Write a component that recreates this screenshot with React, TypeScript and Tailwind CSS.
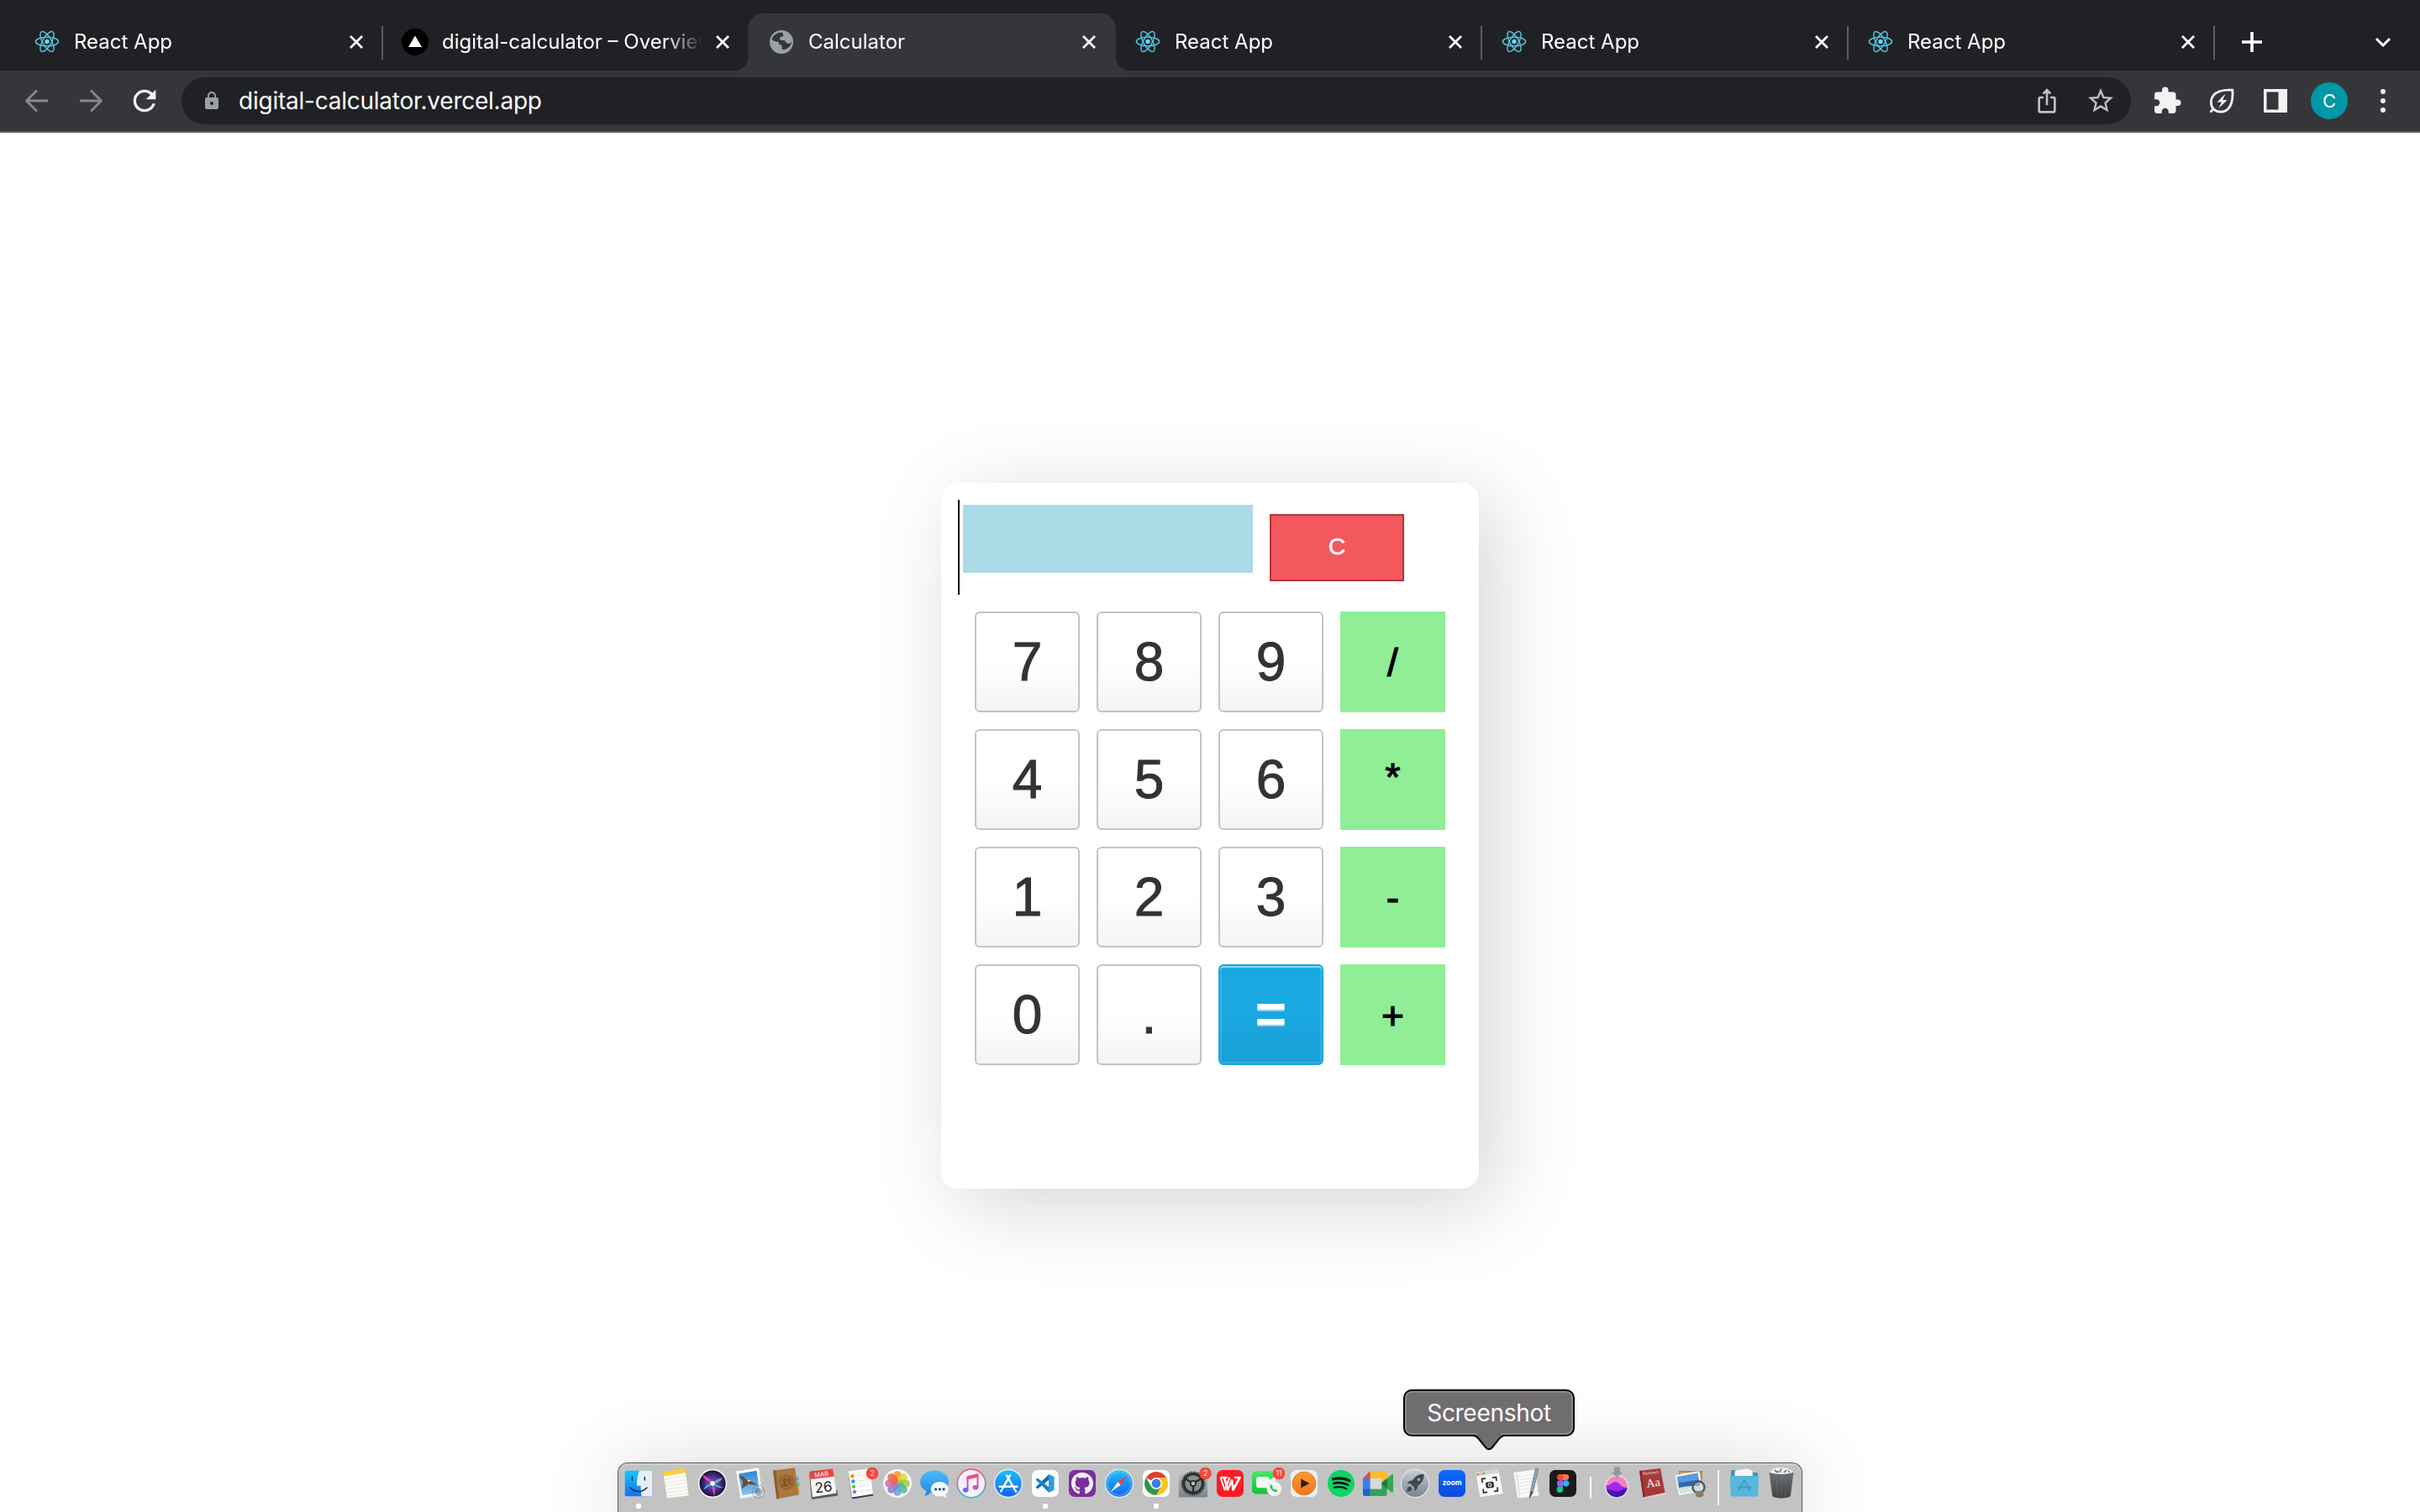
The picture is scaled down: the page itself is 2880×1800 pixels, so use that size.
import React from "react";
import { FaGithub, FaSpotify } from "react-icons/fa";
import { MdExtension, MdIosShare, MdLock, MdRefresh, MdStarBorder } from "react-icons/md";

/* ---------- Tab favicons ---------- */

function ReactFavicon() {
  return (
    <svg viewBox="0 0 32 32" className="size-8">
      <g fill="none" stroke="#53c1de" strokeWidth="1.5">
        <ellipse cx="16" cy="15.500" rx="13.6" ry="5.2" />
        <ellipse cx="16" cy="15.500" rx="13.4" ry="5.2" transform="rotate(60 16 15.5)" />
        <ellipse cx="16" cy="15.500" rx="13.4" ry="5.2" transform="rotate(120 16 15.5)" />
      </g>
      <circle cx="16" cy="15.500" r="2.7" fill="#61dafb" />
    </svg>
  );
}

function VercelFavicon() {
  return (
    <svg viewBox="0 0 32 32" className="size-8">
      <circle cx="16" cy="16" r="16" fill="#000" />
      <path d="M16 8.500 24 22H8z" fill="#fff" />
    </svg>
  );
}

function GlobeFavicon() {
  return (
    <svg viewBox="0 0 32 32" className="size-8">
      <circle cx="16" cy="16" r="14" fill="#9aa0a6" />
      <path
        d="M15.500 4.600c-5 .3-9.300 3.400-11 8.500 1.200 1.300 3 2.300 5.500 2.300 1.800 0 3 .7 3 2.200 0 1.200.7 2 2.200 2 .9 0 1.300.6 1.300 1.600v2.300c0 1 .6 1.600 1.600 1.600h1.400c5-1.600 8.200-5 8.500-9.600-.9 1.700-2 2.500-3.500 2.500-2 0-3-.9-3.600-2.400-.4-1.100-1.300-1.600-2.600-1.600h-1.800c-1.700 0-2.600-.9-2.600-2.200 0-1.400 1-2.100 2.500-2.100 1.100 0 1.700-.6 1.700-1.500V6.700c0-1-.9-1.900-2.600-2.100z"
        fill="#35363a"
      />
    </svg>
  );
}

/* ---------- Browser chrome ---------- */

type Tab = { title: string; icon: React.ReactNode; active?: boolean; divider?: boolean; first?: boolean };

const tabs: Tab[] = [
  { title: "React App", icon: <ReactFavicon />, divider: true, first: true },
  { title: "digital-calculator – Overview", icon: <VercelFavicon /> },
  { title: "Calculator", icon: <GlobeFavicon />, active: true },
  { title: "React App", icon: <ReactFavicon />, divider: true },
  { title: "React App", icon: <ReactFavicon />, divider: true },
  { title: "React App", icon: <ReactFavicon />, divider: true },
];

function Foot({ flip }: { flip?: boolean }) {
  return (
    <svg
      viewBox="0 0 16 16"
      className={flip ? "absolute bottom-0 -right-4 size-4 -scale-x-100" : "absolute bottom-0 -left-4 size-4"}
    >
      <path d="M16 0v16H0C9 16 16 9 16 0z" fill="#35363a" />
    </svg>
  );
}

function TabItem({ tab }: { tab: Tab }) {
  return (
    <div className={`relative flex h-[68px] w-[436px] shrink-0 items-center pr-[23px] ${tab.first ? "pl-[21px]" : "pl-[23px]"}`}>
      {tab.active && (
        <div className="absolute inset-y-0 -right-px -left-px rounded-t-[18px] bg-[#35363a]">
          <Foot />
          <Foot flip />
        </div>
      )}
      <div className="relative shrink-0">{tab.icon}</div>
      <div className="relative ml-4 w-[310px] overflow-hidden text-2xl whitespace-nowrap text-white [mask-image:linear-gradient(to_right,#000_86%,transparent_100%)]">
        {tab.title}
      </div>
      <svg viewBox="0 0 16 16" className="relative ml-auto size-4">
        <path d="M1 1l14 14M15 1 1 15" stroke="#fff" strokeWidth="2.800" />
      </svg>
      {tab.divider && <div className="absolute top-[15px] right-[-1px] h-10 w-0.5 bg-[#5b5e63]" />}
    </div>
  );
}

function TabStrip() {
  return (
    <div className="flex h-[84px] items-center bg-[#202124] pt-4 pl-[19px]">
      {tabs.map((t, i) => (
        <TabItem key={i} tab={t} />
      ))}
      <svg viewBox="0 0 24 24" className="ml-[33px] size-6">
        <path d="M12 0v24M0 12h24" stroke="#fff" strokeWidth="3.600" />
      </svg>
      <svg viewBox="0 0 20 12" className="mr-[34px] ml-auto h-3 w-5">
        <path d="M2 2l8 8 8-8" fill="none" stroke="#fff" strokeWidth="3" />
      </svg>
    </div>
  );
}

function Toolbar() {
  return (
    <div className="flex h-[74px] items-center border-b-2 border-[#5c5d60] bg-[#35363a]">
      <svg viewBox="0 0 28 28" className="ml-[30px] size-7">
        <path d="M27 14H2M14 1.500 1.500 14 14 26.500" fill="none" stroke="#87888b" strokeWidth="2.800" />
      </svg>
      <svg viewBox="0 0 28 28" className="ml-[36px] size-7">
        <path d="M1 14h25M14 1.500 26.500 14 14 26.500" fill="none" stroke="#87888b" strokeWidth="2.800" />
      </svg>
      <MdRefresh className="ml-[30px] size-[40px] text-[#f1f3f4]" />
      <div className="ml-6 flex h-14 w-[2320px] items-center rounded-full bg-[#202124] pr-[18px] pl-6">
        <MdLock className="size-6 text-[#9aa0a6]" />
        <span className="ml-5 text-[28px] tracking-[-0.24px] text-white">digital-calculator.vercel.app</span>
        <MdIosShare className="ml-auto size-8 text-[#bdc1c6]" />
        <MdStarBorder className="ml-[30px] size-[36px] text-[#bdc1c6]" />
      </div>
      <MdExtension className="ml-[25px] size-[36px] text-[#f1f3f4]" />
      <svg viewBox="0 0 30 30" className="ml-[32px] size-[30px]">
        <path
          d="M1.500 28.500l3.700-3.700M5.200 24.800C1.600 21 1.200 13.500 5.200 8.500 9.500 3.200 17 1.500 27.800 2.200c.7 9.300-.4 18-5.800 23-5 4.400-12.800 3.700-16.800-.4z"
          fill="none"
          stroke="#f1f3f4"
          strokeWidth="2.800"
        />
        <path d="M19.500 6.500l-10 10h5.300l-3.300 7.500 10-10h-5.300z" fill="#f1f3f4" />
      </svg>
      <svg viewBox="0 0 28 28" className="ml-[35px] size-7">
        <path d="M0 0h28v28H0zM3.500 3.500v21h14v-21z" fill="#f1f3f4" fillRule="evenodd" />
      </svg>
      <div className="ml-7 flex size-11 items-center justify-center rounded-full bg-[#0097a7] text-[22px] text-white">C</div>
      <svg viewBox="0 0 6 28" className="ml-[39px] h-7 w-1.5 overflow-visible" fill="#f1f3f4">
        <circle cx="3" cy="3" r="3" />
        <circle cx="3" cy="14" r="3" />
        <circle cx="3" cy="25" r="3" />
      </svg>
    </div>
  );
}

/* ---------- Calculator ---------- */

const keys = ["7", "8", "9", "/", "4", "5", "6", "*", "1", "2", "3", "-", "0", ".", "=", "+"];

function Key({ label }: { label: string }) {
  if ("/*-+".includes(label)) {
    return (
      <button
        className={`flex h-[120px] items-center justify-center bg-[#90ee97] text-[46px] leading-none text-black [-webkit-text-stroke:1.2px_#000] ${
          label === "*" ? "pb-1.5" : "pt-px"
        }`}
      >
        {label}
      </button>
    );
  }
  if (label === "=") {
    return (
      <button className="flex h-[120px] items-center justify-center rounded-md border-2 border-[#1aa7df] bg-linear-to-b from-[#1aa8e0] from-50% to-[#18a0d6] pb-0.5 text-[64px] leading-none font-bold text-white shadow-[inset_0_2px_0_rgba(255,255,255,0.45),inset_0_0_0_2px_rgba(255,255,255,0.12)] [text-shadow:0_2px_0_rgba(255,255,255,0.45)]">
        {label}
      </button>
    );
  }
  return (
    <button className="flex h-[120px] items-center justify-center rounded-md border-2 border-[#c4c4c4] bg-linear-to-b from-white from-50% to-[#f4f4f4] text-[64px] leading-none text-[#333] [-webkit-text-stroke:1px_#333]">
      {label}
    </button>
  );
}

function Calculator() {
  return (
    <div className="h-[840px] w-[640px] rounded-[20px] bg-white font-['Liberation_Sans',sans-serif] shadow-[20px_20px_100px_rgba(0,0,0,0.17)]">
      <div className="flex h-[153px] items-start pt-5 pl-5">
        <div className="h-[113px] w-0.5 bg-black" />
        <div className="mt-1.5 ml-1 h-[81px] w-[345px] bg-[#abdbe6]" />
        <button className="mt-[17px] ml-5 h-20 w-40 border-2 border-[#b23539] bg-[#f4585f] pb-0.5 text-[28px] text-white [-webkit-text-stroke:0.5px_#fff]">
          C
        </button>
      </div>
      <div className="grid grid-cols-4 gap-5 px-10">
        {keys.map((k) => (
          <Key key={k} label={k} />
        ))}
      </div>
    </div>
  );
}

/* ---------- Dock ---------- */

function Badge({ x, y, n }: { x: number; y: number; n: string }) {
  return (
    <g>
      <circle cx={x} cy={y} r="7.300" fill="#fb453d" />
      <text x={x} y={y + 3} textAnchor="middle" fontSize="8.500" fill="#fff">
        {n}
      </text>
    </g>
  );
}

const dockIcons: Record<string, React.ReactNode> = {
  finder: (
    <>
      <rect x="5.700" y="6.700" width="32.300" height="30.600" rx="1.500" fill="url(#gFinder)" />
      <path d="M23 6.700c-2 5-3 10-3.200 18h4.700c0 4.500.3 8.500 1 12.600H36.500c1 0 1.500-.6 1.500-1.500V8.200c0-1-.6-1.500-1.500-1.500z" fill="#e7eef7" />
      <path d="M12 27c5.500 6 14.500 6 20 0M14.500 14.500v3.500M29.300 14.500v3.500" fill="none" stroke="#1b2733" strokeWidth="1.400" strokeLinecap="round" />
    </>
  ),
  notes: (
    <>
      <path d="M7 8.300 33.700 3.700 38 36.700 11.300 40z" fill="#fbfbf8" stroke="#b9b39a" strokeWidth=".6" />
      <path d="M7 8.300 33.700 3.700l.9 5.600L8 13.300z" fill="#fbcf35" />
      <path d="M9 17l25.500-3.500M9.500 21 35 17.500M10 25l25.500-3.500M10.500 29 36 25.500M11 33l25.500-3.500M11.300 37 37 33.500" stroke="#dcdcd8" strokeWidth=".7" />
    </>
  ),
  siri: (
    <>
      <circle cx="22" cy="22" r="17.200" fill="#f3f3f3" />
      <circle cx="22" cy="22" r="15.600" fill="url(#gSiri)" />
      <path d="M22 22 11 30c2-5 5-7.500 11-8zM22 22l13 5c-5 1-9-.5-13-5z" fill="#38d6d4" opacity=".85" />
      <path d="M22 22c3 4 3.500 10 2.200 15-2-4-2.700-9-2.200-15zM22 22C15 20 11 15 10 12c6 2 10 5 12 10z" fill="#ec4fb8" opacity=".9" />
      <path d="M22 22c4-5 8-6.500 12-6.500-2 4-6 6.500-12 6.500z" fill="#8be6dc" opacity=".6" />
      <circle cx="22" cy="22" r="2.800" fill="#fff" />
    </>
  ),
  mail: (
    <>
      <path d="M6.700 8.300 32.300 3.700 36.700 35.300 11.700 39.300z" fill="#fff" stroke="#fff" strokeWidth="1.800" strokeDasharray="1.500 1.500" />
      <path d="M9 10.500 30.500 6.700 34 32.800 13.200 36.300z" fill="url(#gSky)" />
      <path d="M9.500 14c3-2 6-.5 9.500 4 4 .5 7 2.500 12 5-3.500 1-8 .5-10.500-.5-3 3-5.500 4.500-9 6 2-3.500 3-6.500 2.500-9-1-2.500-3-4.500-4.500-5.500z" fill="#6b5038" />
      <path d="M19.500 18.500c1.500-1 3-1 4 .2l-3 1.500z" fill="#f4ead2" />
      <circle cx="32.500" cy="32" r="7.500" fill="none" stroke="#858b91" strokeWidth="1" opacity=".8" />
      <circle cx="32.500" cy="32" r="4.500" fill="#53718e" opacity=".55" stroke="#858b91" strokeWidth=".8" />
    </>
  ),
  contacts: (
    <>
      <path d="M33 14l3-.4.7 5-3 .4z" fill="#47b5e8" />
      <path d="M34 21l3-.4.7 5-3 .4z" fill="#5ec55b" />
      <path d="M35 28l2.500-.4.7 5-3 .4z" fill="#f3a33c" />
      <path d="M6 6.700 32 3.300 36.700 35.500 10.300 40.500z" fill="#a97740" />
      <path d="M6 6.700l3-.4 4.300 33.600-3 .6z" fill="#8c5d2c" />
      <circle cx="22" cy="20.500" r="8.600" fill="#9c6b36" stroke="#8a5c2b" strokeWidth="1" />
      <path d="M17 26c-.3-3 1-3.500 2-4-2.500-3-1-7 1-7s3.500 4 1.300 7c2 .7 2.700 1.500 2.900 4M24 21.500c-1.500-3-.5-6.500 1.300-6.500s3.200 4 1.200 6.500c1.500.6 2.200 1.500 2.300 3" fill="#855727" />
    </>
  ),
  calendar: (
    <>
      <path d="M4.800 9 8 41l31-4.500-.5-6z" fill="#55585c" />
      <path d="M5.300 7.500 33.300 4.500 37.500 33.500 9 38.300z" fill="#f6f6f6" />
      <path d="M5.300 7.500 33.300 4.500l1.300 9.300L6.600 17z" fill="#e8443f" />
      <g transform="rotate(-6 20 20)">
        <text x="20.500" y="13.800" textAnchor="middle" fontSize="7.500" fill="#fff">MAR</text>
        <text x="21.300" y="32.500" textAnchor="middle" fontSize="17" fill="#222">26</text>
      </g>
    </>
  ),
  reminders: (
    <>
      <path d="M7.300 9 12 40.500l25.500-4L36 32z" fill="#3d3f42" />
      <path d="M7.300 7.700 33 4.300 37 34.500 12 38.500z" fill="#fcfcfc" />
      <g>
        <circle cx="12.300" cy="13.300" r="2.300" fill="#fb8c1d" />
        <circle cx="13.300" cy="19.500" r="2.300" fill="#1f9bf5" />
        <circle cx="14" cy="25.700" r="2.300" fill="#4fcf47" />
        <circle cx="15" cy="32" r="2.300" fill="#bd62e0" />
      </g>
      <path d="M17 13l10-1.300M18 19.200l15-2M19 25.500l15-2M20 31.500l14-2" stroke="#ddd" strokeWidth=".8" />
      <Badge x={36} y={10} n="2" />
    </>
  ),
  photos: (
    <>
      <circle cx="22" cy="22" r="17" fill="#f6f6f6" />
      {["#f79a1e", "#e8d52c", "#9ccb3b", "#4fb98b", "#5aa9e0", "#8b7cc8", "#cb6bb0", "#f0604a"].map((c, i) => (
        <rect key={c} x="17.400" y="7.200" width="9.200" height="14.300" rx="4.600" fill={c} opacity=".85" transform={`rotate(${i * 45} 22 22)`} />
      ))}
    </>
  ),
  messages: (
    <>
      <path d="M22 6.500c9.500 0 17 6 17 13.500s-7.500 13.700-17 13.700c-1.800 0-3.500-.2-5-.6-1.500 2-4 3.500-7 3.700 1.500-1.700 2.300-3.700 2-6C7.500 28.500 5 24.500 5 20 5 12.500 12.500 6.500 22 6.500z" fill="url(#gBubble)" />
      <path d="M28.300 20c6 0 10.400 4 10.400 8.800 0 2.700-1.400 5-3.500 6.700-.2 1.300.3 2.500 1.200 3.500-2 0-3.500-.7-4.600-1.900-7.500 1.700-14-2.500-14-8.300 0-4.800 4.500-8.800 10.500-8.800z" fill="#f5f8fb" />
      <g fill="#1c4f7c">
        <circle cx="23.700" cy="28.800" r="1.600" />
        <circle cx="28.400" cy="28.800" r="1.600" />
        <circle cx="33.100" cy="28.800" r="1.600" />
      </g>
    </>
  ),
  music: (
    <>
      <circle cx="22" cy="22" r="16.800" fill="#f4f1f8" stroke="url(#gMusic)" strokeWidth="1.800" />
      <path d="M29.500 12v14.500" stroke="#d957a8" strokeWidth="2" />
      <path d="M16.500 13.200 30.500 10v4.500l-14 3.200z" fill="#f5527e" />
      <path d="M17.500 15v14.500" stroke="#b45fd0" strokeWidth="2" />
      <ellipse cx="15.200" cy="29.700" rx="3.400" ry="2.800" fill="#7a63e8" />
      <ellipse cx="27" cy="26.700" rx="3.400" ry="2.800" fill="#b559d2" />
    </>
  ),
  appstore: (
    <>
      <circle cx="22" cy="22" r="17.200" fill="#e8eef5" />
      <circle cx="22" cy="22" r="15.800" fill="url(#gBlue)" />
      <path d="M20 12.500l9.500 16.500M24 12.500l-8.800 15.300M11.500 25.800h13.500M29 25.800h3.500M14 30l-.8 1.300M30.300 30.300l.8 1.300" stroke="#fff" strokeWidth="2.500" strokeLinecap="round" />
    </>
  ),
  vscode: (
    <>
      <rect x="6" y="6" width="32" height="32" rx="7" fill="#fff" />
      <path d="M26.500 11v6.500L12.800 28.500l-2.300-2z" fill="#0a6fb5" />
      <path d="M26.500 33v-6.500L12.800 15.500l-2.300 2z" fill="#1583c9" />
      <path d="M26 11l6.500 3v16L26 33z" fill="#2a9ce6" />
    </>
  ),
  github: (
    <>
      <rect x="6" y="6" width="32" height="32" rx="7" fill="#7a2f9c" />
      <FaGithub x="8.500" y="8.500" size={27} color="#f3eef7" />
    </>
  ),
  safari: (
    <>
      <circle cx="22" cy="22" r="17.200" fill="#e6e9ec" />
      <circle cx="22" cy="22" r="15.800" fill="url(#gBlue)" />
      <circle cx="22" cy="22" r="13.800" fill="none" stroke="#cfe8fb" strokeWidth="1.600" strokeDasharray=".6 1.500" />
      <path d="M32.500 11.500 23.800 23.800 20.200 20.200z" fill="#f0413a" />
      <path d="M11.500 32.500 20.200 20.200 23.800 23.800z" fill="#f5f5f5" />
    </>
  ),
  chrome: (
    <>
      <rect x="6" y="6" width="32" height="32" rx="7" fill="#fff" />
      <path d="M22 22 9.880 15A14 14 0 0 1 34.120 15z" fill="#e33b2e" />
      <path d="M22 15h12.120a14 14 0 0 1-12.100 21l6-10.500z" fill="#fcc31e" />
      <path d="M9.880 15A14 14 0 0 0 22 36l6-10.500-12 .1z" fill="#2a9a48" />
      <circle cx="22" cy="22" r="7" fill="#fff" />
      <circle cx="22" cy="22" r="5.400" fill="#3c7ee8" />
    </>
  ),
  settings: (
    <>
      <rect x="4.700" y="6" width="34.300" height="32.500" rx="1" fill="url(#gSteel)" />
      <circle cx="22" cy="22" r="13.300" fill="none" stroke="#333" strokeWidth="2.400" strokeDasharray="1.500 1.100" />
      <circle cx="22" cy="22" r="11.300" fill="#8a8d90" stroke="#2c2c2c" strokeWidth="3" />
      <path d="M22 22V34M22 22 12 16M22 22l10-6" stroke="#2c2c2c" strokeWidth="2.500" />
      <circle cx="22" cy="22" r="3.200" fill="#b8babc" stroke="#2c2c2c" strokeWidth="1.800" />
      <Badge x={36.500} y={10} n="2" />
    </>
  ),
  wps: (
    <>
      <rect x="6" y="6" width="32" height="32" rx="7" fill="#ff1a26" />
      <path d="M10.500 15h7.500l-3 0 4 14.500 5-11 1.500 11L33.500 15H27" fill="none" stroke="#fff" strokeWidth="2.600" strokeLinejoin="round" />
      <path d="M10.500 15l5 14.500L21.500 15" fill="none" stroke="#fff" strokeWidth="2" strokeLinejoin="round" />
    </>
  ),
  facetime: (
    <>
      <rect x="4" y="7.500" width="27" height="27" rx="5" fill="url(#gGreen)" />
      <path d="M25 18l7-5v17l-7-4z" fill="#e9faea" />
      <rect x="9" y="14.300" width="16" height="13" rx="3" fill="#f5faf5" />
      <circle cx="30.300" cy="28.300" r="8.800" fill="#f2f4f2" />
      <path d="M26.200 23.800c-1.300 1-1 3.300 1.200 5.700s4.700 3.400 6.200 2.300l.8-1-2.300-2-1.500.8c-1-.5-2-1.500-2.500-2.500l.8-1.500-1.800-2.300z" fill="#22c540" />
      <Badge x={36} y={10} n="11" />
    </>
  ),
  player: (
    <>
      <rect x="6" y="6" width="32" height="32" rx="7" fill="#f1efee" />
      <circle cx="22" cy="22" r="13.800" fill="url(#gOrange)" stroke="#d66a14" strokeWidth=".8" />
      <path d="M18.300 16.500v11L28.300 22z" fill="#2a1c10" />
    </>
  ),
  spotify: (
    <>
      <circle cx="22" cy="22" r="14" fill="#0d1210" />
      <FaSpotify x="5.500" y="5.500" size={33} color="#0bd765" />
    </>
  ),
  meet: (
    <>
      <path d="M4 16h9v14H4z" fill="#3b7ded" />
      <path d="M12.700 7.300V16H4z" fill="#e8453a" />
      <path d="M12.700 7.300H30c1.700 0 2.700 1 2.700 2.700V18l-6 4v-6H12.700z" fill="#fcbc2a" />
      <path d="M4 28.500h8.700V37H6.500C5 37 4 36 4 34.500z" fill="#1c63cf" />
      <path d="M12.700 28.500h13.500V22l6.500 5v7.300c0 1.700-1 2.700-2.700 2.700H12.700z" fill="#31a556" />
      <path d="M25.500 22 38 11.500c1-.8 2-.3 2 1v19c0 1.300-1 1.800-2 1z" fill="#35a853" />
      <path d="M25.500 22l7.200-6.200v12.400z" fill="#1a7a3c" />
      <path d="M12.700 16h13.500v12.500H12.700z" fill="#d9d9d9" />
    </>
  ),
  launchpad: (
    <>
      <circle cx="22" cy="22" r="17.200" fill="#e3e6e8" />
      <circle cx="22" cy="22" r="16" fill="url(#gSteel2)" />
      <path d="M32.500 11c-6-.3-10.500 2.300-13.500 7.500-2.500-.2-4.700.8-6.200 3.500l4 .3 4.500 4.500.3 4.200c2.700-1.500 3.700-3.700 3.500-6.300 5-3 7.700-7.700 7.400-13.700z" fill="#3f464c" />
      <circle cx="26.500" cy="17.300" r="1.900" fill="#9aa5ac" />
      <path d="M16 25.500c-2.500.3-3.500 2.500-3.700 6.300 3.700-.2 6-1.300 6.200-3.800z" fill="#3f464c" />
    </>
  ),
  zoom: (
    <>
      <rect x="6" y="6" width="32" height="32" rx="7" fill="url(#gZoom)" />
      <text x="22" y="24.300" textAnchor="middle" fontSize="8.600" fontWeight="700" fill="#fff">zoom</text>
    </>
  ),
  screenshot: (
    <>
      <path d="M6 9 33.500 4.500 39 34.500 11 38.500z" fill="#fafafa" stroke="#aaa" strokeWidth=".4" />
      <path d="M6 9 33.500 4.500l1 5L7 13.500z" fill="#d5d5d5" />
      <circle cx="9" cy="11.200" r="1.200" fill="#f25a52" />
      <circle cx="12.500" cy="10.600" r="1.200" fill="#f5b52e" />
      <circle cx="16" cy="10" r="1.200" fill="#48c245" />
      <g transform="rotate(-7 23 23.500)" fill="none" stroke="#2f2f2f" strokeWidth="1.700">
        <path d="M14.500 20v-4.500H19M27 15.500h4.500V20M31.500 27.500V32H27M19 32h-4.500v-4.500" />
        <rect x="19" y="21" width="8" height="5.500" rx="1" fill="#2f2f2f" />
        <circle cx="23" cy="23.700" r="1.900" stroke="#fff" strokeWidth="1" />
      </g>
    </>
  ),
  textedit: (
    <>
      <path d="M7 8.700 33 5.300 37.500 36.500 12 40z" fill="#fafafa" stroke="#bbb" strokeWidth=".4" />
      <path d="M10 14l23-3M10.500 18l23-3M11 22l23-3M11.500 26l23-3M12.500 30l23-3M13 34l23-3" stroke="#d8d8d8" strokeWidth=".7" />
      <path d="M10.500 9 15 39" stroke="#f0b0a8" strokeWidth=".6" />
      <path d="M33.500 4.500c2-1 3.300 0 3 2L30.500 32l-4 7.500-.3-.5 1.300-8z" fill="#8ba3ba" stroke="#5b6d7e" strokeWidth=".7" />
      <path d="M28 31.500l-1.800 8 4.300-7.200z" fill="#3a3f45" />
    </>
  ),
  figma: (
    <>
      <rect x="6" y="6" width="32" height="32" rx="7" fill="#1b1b1b" />
      <path d="M22 11h-3.500a3.600 3.600 0 0 0 0 7.200H22z" fill="#f24e1e" />
      <path d="M22 11h3.500a3.600 3.600 0 0 1 0 7.200H22z" fill="#ff7262" />
      <path d="M22 18.200h-3.500a3.700 3.700 0 0 0 0 7.400H22z" fill="#a259ff" />
      <circle cx="25.700" cy="21.900" r="3.700" fill="#1abcfe" />
      <path d="M22 25.600h-3.500a3.700 3.700 0 1 0 3.500 3.700z" fill="#0acf83" />
    </>
  ),
  monterey: (
    <>
      <circle cx="22" cy="26" r="13.800" fill="#f3f0f6" />
      <circle cx="22" cy="26" r="12.800" fill="#f57fc0" />
      <path d="M9.300 24.500c4 1 7-4.500 11-4.500 5 0 7 8 14.400 6.500a12.800 12.800 0 0 1-25.400-2z" fill="#a227e6" />
      <path d="M9.800 29.500c5-1 8 2 12.500 2s6-4 12.200-3.500a12.800 12.800 0 0 1-24.700 1.500z" fill="#3c1ab8" />
      <path d="M19 2.500h7v6.300h3l-6.500 6-6.500-6h3z" fill="#8f9a9f" />
    </>
  ),
  dictionary: (
    <>
      <path d="M5.500 7.500 9.500 40l27-5-.7-3z" fill="#dcd6cc" />
      <path d="M5 7 30 4 35.500 33 9.500 38.500z" fill="#a8393a" />
      <path d="M5 7l2.500-.3 4.500 31.300-2.500.5z" fill="#862a2c" />
      <g transform="rotate(-8 21 22)" fontFamily="Liberation Serif, serif" fill="#fff">
        <text x="20.500" y="10.500" textAnchor="middle" fontSize="4.500">Dictionary</text>
        <text x="21.500" y="26" textAnchor="middle" fontSize="14">Aa</text>
      </g>
    </>
  ),
  preview: (
    <>
      <path d="M8 7h28l-1 24H8z" fill="#b08d4c" />
      <path d="M10 9h24v20H10z" fill="#d8bb7a" />
      <path d="M3.500 12.300 32 7.300 36.500 31 8 36z" fill="#fafafa" />
      <path d="M5.500 14 30.500 9.500l1.600 8.500L7 22z" fill="#5a9ae0" />
      <path d="M7 21.500 32 17.500l2.300 11.800L9.500 33.500z" fill="#2d68b4" />
      <path d="M8 27.500c8-3 16-2 25.500-3l.8 5L9.500 33.500z" fill="#d9e2e5" />
      <circle cx="31.500" cy="26.500" r="7" fill="#c9d6df" fillOpacity=".55" stroke="#555" strokeWidth="2.400" />
      <path d="M27 31.500l8-1 3 5c-2 3.500-7 4-9.500 1.500z" fill="#8a7a68" />
    </>
  ),
  folder: (
    <>
      <path d="M6 8c0-1.300.7-2 2-2h8l3 3h17c1.300 0 2 .7 2 2v4H6z" fill="#3d93b8" />
      <path d="M11 6.500 26 4.500l5.500 2.500.5 8H10z" fill="#f7f7f7" />
      <path d="M5 13h34l-.8 22.500c0 1.300-.8 2-2 2H7.500c-1.200 0-2-.7-2-2z" fill="#57b7dc" />
      <path d="M22 17.500 15 31M21.500 17.500 29 31M13.500 26.500h17" fill="none" stroke="#3a95bb" strokeWidth="1.500" />
    </>
  ),
  trash: (
    <>
      <path d="M8 8c3-3.500 8-5.500 12-4.500 5-1 11 1 16 4.500l-2 4H10z" fill="#eceeef" />
      <path d="M14 6l3 3M22 4.500l-2 4M28 6l-3 3" stroke="#5a6066" strokeWidth="1.400" />
      <path d="M17 7l2 2M30 7l2 2" stroke="#2f8f6a" strokeWidth="1.400" />
      <path d="M7.500 8.500c5 3.300 24 3.300 29 0L33 36.500c-1 4-21 4-22 0z" fill="url(#gTrash)" />
      <path d="M9 13l3 24M35 13l-3 24M22 14v24M16 13.500l1.500 24M28 13.500l-1.500 24" stroke="#777" strokeWidth=".5" />
    </>
  ),
};

const apps = [
  "finder", "notes", "siri", "mail", "contacts", "calendar", "reminders", "photos", "messages", "music",
  "appstore", "vscode", "github", "safari", "chrome", "settings", "wps", "facetime", "player", "spotify",
  "meet", "launchpad", "zoom", "screenshot", "textedit", "figma",
];
const running = ["finder", "vscode", "chrome"];

function DockItem({ name }: { name: string }) {
  return (
    <div className="relative flex w-11 shrink-0 flex-col items-center">
      {name === "screenshot" && <Tooltip />}
      <svg viewBox="0 0 44 44" className="size-11 overflow-visible">
        {dockIcons[name]}
      </svg>
      {running.includes(name) && <div className="mt-0.5 mr-px size-1.5 rounded-[2px] bg-white" />}
    </div>
  );
}

function Tooltip() {
  return (
    <div className="absolute bottom-[78px] left-1/2 flex h-14 w-[204px] -translate-x-1/2 items-center justify-center">
      <svg viewBox="0 0 204 73" className="absolute top-0 left-0 h-[73px] w-[204px] overflow-visible">
        <path
          d="M10 1h184a9 9 0 0 1 9 9v36a9 9 0 0 1-9 9H121c-3 0-4.500 1-6.500 3.500l-8.500 10.500c-2.500 3-5.500 3-8 0L89.500 58.500C87.500 56 86 55 83 55H10a9 9 0 0 1-9-9V10a9 9 0 0 1 9-9z"
          fill="#6f6d70"
          stroke="#000"
          strokeWidth="2"
        />
        <path d="M10 3h184a7 7 0 0 1 7 7v36a7 7 0 0 1-7 7H10a7 7 0 0 1-7-7V10a7 7 0 0 1 7-7z" fill="none" stroke="#908f91" strokeWidth="1.500" />
        <path d="M88 51.500h28v4l-14 12-14-12z" fill="#6f6d70" />
      </svg>
      <span className="relative text-[28px] leading-none tracking-[-0.3px] text-white">Screenshot</span>
    </div>
  );
}

function Gradients() {
  const g = (id: string, a: string, b: string) => (
    <linearGradient id={id} x1="0" y1="0" x2="0" y2="1">
      <stop stopColor={a} />
      <stop offset="1" stopColor={b} />
    </linearGradient>
  );
  return (
    <svg className="absolute size-0">
      <defs>
        {g("gFinder", "#12c8fb", "#1672f3")}
        {g("gSky", "#2c86d8", "#8cc4ef")}
        {g("gBlue", "#1cc0fb", "#1266ee")}
        {g("gBubble", "#4ebcfa", "#1c86e6")}
        {g("gMusic", "#fb5b6b", "#3fb7f2")}
        {g("gSteel", "#c3c9cd", "#77838b")}
        {g("gSteel2", "#c2d0d6", "#7c8386")}
        {g("gGreen", "#4be56a", "#11c332")}
        {g("gOrange", "#fb9d33", "#f47417")}
        {g("gZoom", "#0b6bff", "#0a4bd8")}
        {g("gTrash", "#6c7073", "#3f4244")}
        <radialGradient id="gSiri">
          <stop stopColor="#3d7fd0" />
          <stop offset=".5" stopColor="#5b2f9c" />
          <stop offset="1" stopColor="#141233" />
        </radialGradient>
      </defs>
    </svg>
  );
}

function Dock() {
  return (
    <div className="absolute bottom-0 left-[735px] flex h-[59px] w-[1410px] items-start rounded-t-xl border border-b-0 border-[#58595a] bg-[#c3c3c3] pt-0.5 pl-0.5 shadow-[0_10px_95px_rgba(0,0,0,0.2),inset_0_2px_0_#d0d0d0]">
      <Gradients />
      {apps.map((a) => (
        <DockItem key={a} name={a} />
      ))}
      <div className="mt-3.5 mr-2 ml-2.5 h-[26px] w-0.5 bg-white" />
      <DockItem name="monterey" />
      <DockItem name="dictionary" />
      <DockItem name="preview" />
      <div className="mt-1.5 mr-2 ml-2.5 h-[42px] w-0.5 bg-white" />
      <DockItem name="folder" />
      <DockItem name="trash" />
    </div>
  );
}

export default function App() {
  return (
    <div className="relative flex h-[1800px] w-[2880px] flex-col overflow-hidden bg-white font-[Inter,sans-serif]">
      <TabStrip />
      <Toolbar />
      <main className="flex flex-1 justify-center pt-[417px]">
        <Calculator />
      </main>
      <Dock />
    </div>
  );
}
